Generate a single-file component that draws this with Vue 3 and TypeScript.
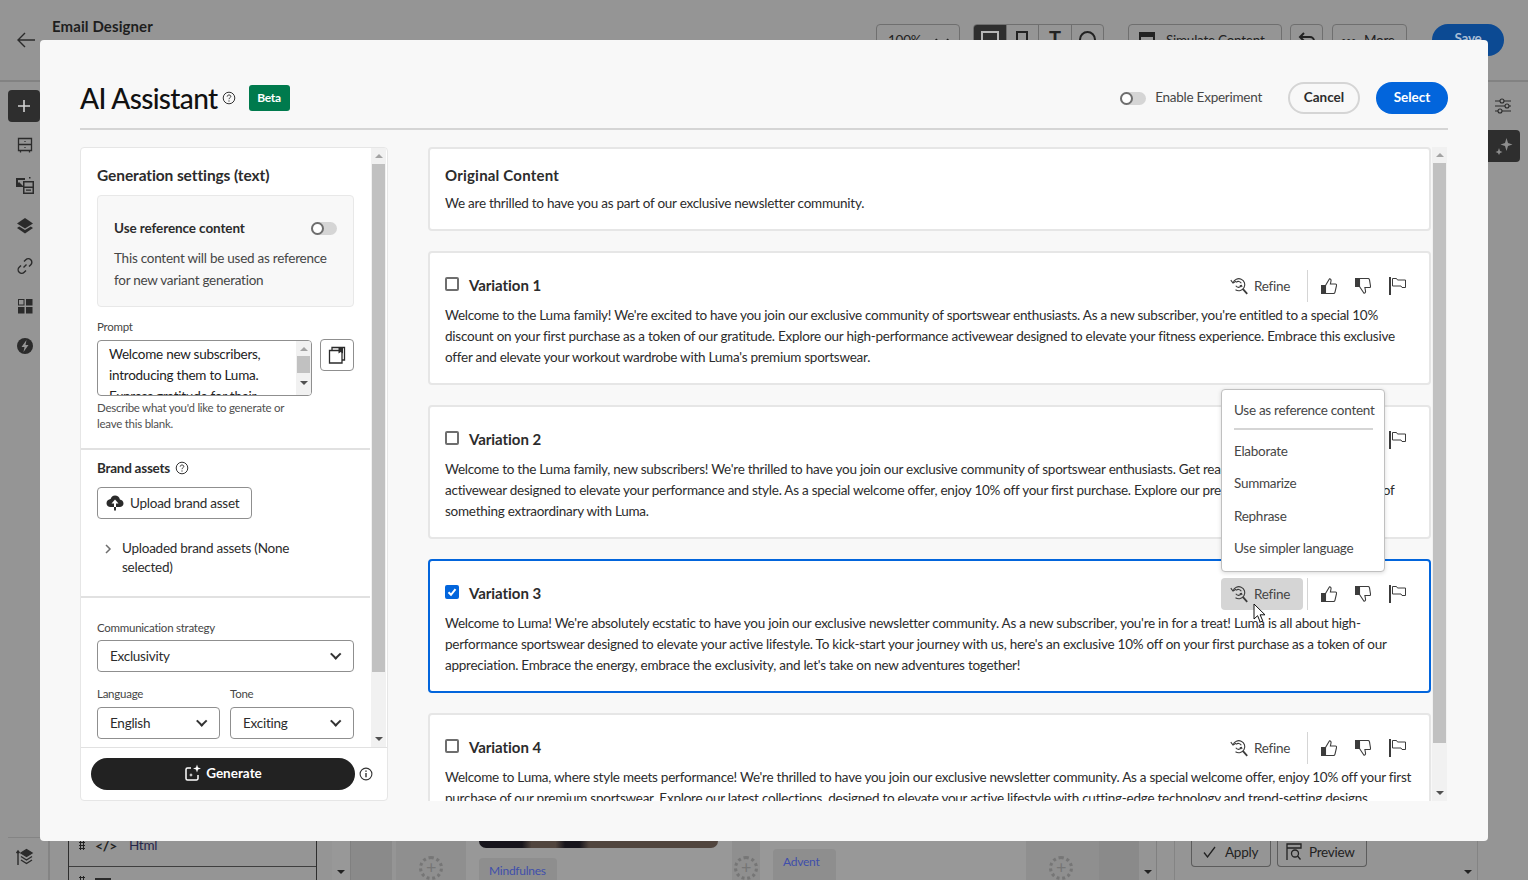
<script setup lang="ts">
interface Variation {
  title: string;
  lines: string[];
  selected?: boolean;
}

const variations: Variation[] = [
  {
    title: "Variation 1",
    lines: [
      "Welcome to the Luma family! We're excited to have you join our exclusive community of sportswear enthusiasts. As a new subscriber, you're entitled to a special 10%",
      "discount on your first purchase as a token of our gratitude. Explore our high-performance activewear designed to elevate your fitness experience. Embrace this exclusive",
      "offer and elevate your workout wardrobe with Luma's premium sportswear.",
    ],
  },
  {
    title: "Variation 2",
    lines: [
      "Welcome to the Luma family, new subscribers! We're thrilled to have you join our exclusive community of sportswear enthusiasts. Get ready to discover our premium",
      "activewear designed to elevate your performance and style. As a special welcome offer, enjoy 10% off your first purchase. Explore our premium gear and become part of",
      "something extraordinary with Luma.",
    ],
  },
  {
    title: "Variation 3",
    selected: true,
    lines: [
      "Welcome to Luma! We're absolutely ecstatic to have you join our exclusive newsletter community. As a new subscriber, you're in for a treat! Luma is all about high-",
      "performance sportswear designed to elevate your active lifestyle. To kick-start your journey with us, here's an exclusive 10% off on your first purchase as a token of our",
      "appreciation. Embrace the energy, embrace the exclusivity, and let's take on new adventures together!",
    ],
  },
  {
    title: "Variation 4",
    lines: [
      "Welcome to Luma, where style meets performance! We're thrilled to have you join our exclusive newsletter community. As a special welcome offer, enjoy 10% off your first",
      "purchase of our premium sportswear. Explore our latest collections, designed to elevate your active lifestyle with cutting-edge technology and trend-setting designs.",
    ],
  },
];

const refineOptions = ["Elaborate", "Summarize", "Rephrase", "Use simpler language"];
</script>

<template>
  <div class="page">
    <header class="topbar">
      <svg class="back" width="20" height="18" viewBox="0 0 20 18" fill="none" stroke="#2b2b2b" stroke-width="1.4">
        <path d="M19 9H2M9 2 2 9l7 7" />
      </svg>
      <div class="page-title">Email Designer</div>
      <div class="tools">
        <div class="tool zoom-tool">100%<span class="tool-caret"></span></div>
        <div class="segments">
          <span class="seg seg-on"><i class="seg-box"></i></span>
          <span class="seg"><i class="seg-phone"></i></span>
          <span class="seg seg-t">T</span>
          <span class="seg"><i class="seg-round"></i></span>
        </div>
        <div class="tool sim-tool"><i class="sim-icon"></i>Simulate Content</div>
        <div class="tool undo-tool">
          <svg width="18" height="14" viewBox="0 0 18 14" fill="none" stroke="#222" stroke-width="2"><path d="M6 1 2 5l4 4M2 5h10a4 4 0 0 1 4 4v3" /></svg>
        </div>
        <div class="tool more-tool"><b>•••</b>More</div>
        <div class="save">Save</div>
      </div>
    </header>

    <div class="workspace">
      <nav class="rail">
        <div class="rail-add">
          <svg width="14" height="14" viewBox="0 0 14 14" stroke="#d2d2d2" stroke-width="1.6"><path d="M7 1v12M1 7h12" /></svg>
        </div>
        <svg class="rail-icon" width="18" height="18" viewBox="0 0 18 18" fill="none" stroke="#2b2b2b" stroke-width="1.3">
          <path d="M2.500 2.500h13v12h-13zM2.500 8.500h13M4.500 14.500v2M13.500 14.500v2" /><path d="M9 5v.8M9 11v.8" stroke-width="1.600" />
        </svg>
        <svg class="rail-icon rail-icon-wide" width="18" height="18" viewBox="0 0 18 18" fill="#2b2b2b">
          <path d="M0 2h9v2H2v5H0z" /><path d="M0 9l3-3 4 4v1H0z" /><path d="M7 5h11v13H7zm1.500 7v4.500h8V12zm0-5.500V10.500h8V6.500z" fill-rule="evenodd" /><path d="M10 13.500h5v1.200h-5zM13 1h1.500v1.500H13z" />
        </svg>
        <svg class="rail-icon" width="18" height="18" viewBox="0 0 18 18" fill="#2b2b2b">
          <path d="M9 1 17 6.500 9 11.500 1 6.500z" /><path d="M3.200 9.500 9 13.100l5.800-3.600L17 11l-8 5.500L1 11z" />
        </svg>
        <svg class="rail-icon" width="18" height="18" viewBox="0 0 18 18" fill="none" stroke="#2b2b2b" stroke-width="1.4">
          <path d="M7.500 10.500 10.500 7.500M8 4.500l1.800-1.800a3.400 3.400 0 0 1 5 5L13 9.500M10 13.500l-1.800 1.800a3.400 3.400 0 0 1-5-5L5 8.500" />
        </svg>
        <svg class="rail-icon" width="18" height="18" viewBox="0 0 18 18" fill="#2b2b2b">
          <path d="M2 2h6.500v6.500H2zm1 1v4.500h4.500V3z" fill-rule="evenodd" /><path d="M10 2h6.500v6.500H10zM2 10h6.500v6.500H2zM10 10h6.500v6.500H10z" />
        </svg>
        <svg class="rail-icon" width="18" height="18" viewBox="0 0 18 18">
          <circle cx="9" cy="9" r="8" fill="#2b2b2b" /><path d="M10.500 3 5.500 10H8.500L7.500 15l5-7H9.500z" fill="#959595" />
        </svg>
        <div class="rail-bottom">
          <svg width="18" height="18" viewBox="0 0 18 18" fill="none" stroke="#2b2b2b" stroke-width="1.400">
            <path d="M2 17V3M.5 5 2 3l1.500 2" /><path d="M10.500 1.500 16 5l-5.500 3.500L5 5z" fill="#2b2b2b" /><path d="M5 8.500l5.500 3.500L16 8.500M5 12l5.500 3.500L16 12" />
          </svg>
        </div>
      </nav>

      <div class="blocks">
        <div class="blocks-list">
          <div class="block-row">
            <i class="grip"></i>
            <span class="code-mark">&lt;/&gt;</span>
            <span>Html</span>
          </div>
          <div class="block-next"><i class="grip"></i><b></b></div>
        </div>
        <div class="scroll-strip"><i class="arrow-down"></i></div>
      </div>

      <div class="canvas-gutter"></div>

      <div class="canvas">
        <div class="canvas-add add-a"><span>+</span></div>
        <div class="canvas-col">
          <div class="photo"></div>
          <div class="chip chip-first">Mindfulnes</div>
        </div>
        <div class="canvas-add add-b"><span>+</span></div>
        <div class="canvas-col">
          <div class="chip">Advent<br />ure</div>
        </div>
        <div class="canvas-add add-c"><span>+</span></div>
        <div class="canvas-dark"></div>
        <div class="canvas-scroll"><i class="arrow-down"></i></div>
      </div>

      <aside class="props">
        <div class="props-side">
          <svg width="18" height="16" viewBox="0 0 18 16" fill="none" stroke="#2b2b2b" stroke-width="1.100">
            <path d="M1 3h5M10 3h7M1 8h10M15 8h2M1 13h3M8 13h9" /><circle cx="8" cy="3" r="2" /><circle cx="13" cy="8" r="2" /><circle cx="6" cy="13" r="2" />
          </svg>
          <div class="props-tile">
            <svg width="18" height="18" viewBox="0 0 18 18" fill="#8e8e8e"><path d="M11.500 1 13 6l4.500 1.500L13 9l-1.500 5L10 9 5.500 7.500 10 6zM4 11l1 3 2.500 1-2.500 1-1 2-1-2-2.500-1L3 14z" /></svg>
          </div>
        </div>
        <div class="props-foot">
          <div class="foot-btn btn-apply">
            <svg width="13" height="12" viewBox="0 0 13 12" fill="none" stroke="#222" stroke-width="1.300"><path d="m1 6.500 3.500 4.500L12 1" /></svg>
            Apply
          </div>
          <div class="foot-btn btn-preview">
            <svg width="17" height="18" viewBox="0 0 17 18" fill="none" stroke="#222" stroke-width="1.300"><path d="M1 17V1h14v4H1" /><circle cx="9" cy="10.500" r="3.500" /><path d="m11.500 13 3 3.500" /></svg>
            Preview
          </div>
          <div class="foot-scroll"><i class="arrow-down"></i></div>
        </div>
      </aside>
    </div>

    <section class="modal">
      <div class="modal-head">
        <h1>AI Assistant</h1>
        <svg class="help" width="14" height="14" viewBox="0 0 14 14" fill="none" stroke="#333" stroke-width="1">
          <circle cx="7" cy="7" r="5.800" /><path d="M5.200 5.600C5.300 4.500 6 4 7 4c1.100 0 1.800.6 1.800 1.500C8.800 6.700 7 6.800 7 8.200" /><path d="M7 9.400v1" stroke-width="1.200" />
        </svg>
        <span class="beta">Beta</span>
        <div class="head-actions">
          <span class="switch"><i></i></span>
          <span class="experiment">Enable Experiment</span>
          <button class="btn-cancel">Cancel</button>
          <button class="btn-select">Select</button>
        </div>
      </div>

      <div class="modal-body">
        <div class="settings">
          <div class="settings-main">
            <div class="settings-scroll">
              <div class="section section-gen">
                <h2>Generation settings (text)</h2>
                <div class="ref-box">
                  <div class="ref-head">
                    <strong>Use reference content</strong>
                    <span class="switch switch-small"><i></i></span>
                  </div>
                  <p>This content will be used as reference<br />for new variant generation</p>
                </div>
                <label class="field-label prompt-label">Prompt</label>
                <div class="prompt-row">
                  <div class="prompt-box">
                    <div class="prompt-text">
                      Welcome new subscribers,<br />introducing them to Luma.<br />Express gratitude for their
                    </div>
                    <div class="mini-scroll">
                      <i class="arrow-up"></i>
                      <b></b>
                      <i class="arrow-down"></i>
                    </div>
                  </div>
                  <button class="prompt-lib">
                    <svg width="18" height="18" viewBox="0 0 18 18" fill="none" stroke="#2b2b2b" stroke-width="1.300">
                      <path d="M4 4V1.500h12.500V14H14" /><path d="M1.500 4.500H14V17H1.500z" /><path d="M10.500 1.500h4.500v6l-2.200-1.500-2.300 1.500z" fill="#2b2b2b" stroke="none" />
                    </svg>
                  </button>
                </div>
                <p class="helper">Describe what you'd like to generate or<br />leave this blank.</p>
              </div>

              <div class="section section-brand">
                <div class="brand-title">
                  <h3>Brand assets</h3>
                  <svg width="14" height="14" viewBox="0 0 14 14" fill="none" stroke="#333" stroke-width="1">
                    <circle cx="7" cy="7" r="5.800" /><path d="M5.200 5.600C5.300 4.500 6 4 7 4c1.100 0 1.800.6 1.800 1.500C8.800 6.700 7 6.800 7 8.200" /><path d="M7 9.400v1" stroke-width="1.200" />
                  </svg>
                </div>
                <button class="upload">
                  <svg width="18" height="16" viewBox="0 0 18 16" fill="#2b2b2b">
                    <path d="M9 .5C6.800.5 5 2 4.600 4.100 2.500 4.300.5 6 .5 8.300.5 10.500 2.300 12 4.500 12H8V8.500H5.500L9 4.500l3.500 4H10V12h3.800c2 0 3.700-1.500 3.700-3.600 0-2.100-1.600-3.800-3.600-4C13.400 2 11.400.5 9 .5z" /><path d="M8 12h2v3.500H8z" />
                  </svg>
                  Upload brand asset
                </button>
                <div class="uploaded">
                  <svg width="8" height="10" viewBox="0 0 8 10" fill="none" stroke="#6e6e6e" stroke-width="1.500"><path d="m2 1 4 4-4 4" /></svg>
                  <span>Uploaded brand assets (None<br />selected)</span>
                </div>
              </div>

              <div class="section section-form">
                <label class="field-label">Communication strategy</label>
                <div class="select">Exclusivity<i class="chev"></i></div>
                <div class="select-pair">
                  <div>
                    <label class="field-label">Language</label>
                    <div class="select">English<i class="chev"></i></div>
                  </div>
                  <div>
                    <label class="field-label">Tone</label>
                    <div class="select">Exciting<i class="chev"></i></div>
                  </div>
                </div>
              </div>
            </div>
            <div class="scrollbar scrollbar-left">
              <i class="arrow-up"></i>
              <b></b>
              <i class="arrow-down"></i>
            </div>
          </div>
          <div class="settings-foot">
            <button class="generate">
              <svg width="18" height="18" viewBox="0 0 18 18" fill="none" stroke="#fff" stroke-width="1.500">
                <path d="M7 4H3.500A1.500 1.500 0 0 0 2 5.500v9A1.500 1.500 0 0 0 3.500 16h9a1.500 1.500 0 0 0 1.500-1.500V11" />
                <path d="M13 .5l1 3 3 1-3 1-1 3-1-3-3-1 3-1zM7 9l.6 1.400L9 11l-1.400.6L7 13l-.6-1.400L5 11l1.400-.6z" fill="#fff" stroke="none" />
              </svg>
              Generate
            </button>
            <svg width="14" height="14" viewBox="0 0 14 14" fill="none" stroke="#333" stroke-width="1.100">
              <circle cx="7" cy="7" r="5.900" /><path d="M7 6v4.200" stroke-width="1.400" /><path d="M7 3.400v1.400" stroke-width="1.500" />
            </svg>
          </div>
        </div>

        <div class="results">
          <div class="results-list">
            <article class="card card-original">
              <h2>Original Content</h2>
              <p>We are thrilled to have you as part of our exclusive newsletter community.</p>
            </article>

            <article
              v-for="item in variations"
              :key="item.title"
              :class="{ card: true, 'card-selected': item.selected }"
            >
              <div class="card-head">
                <span :class="{ check: true, 'check-on': item.selected }">
                  <svg v-if="item.selected" width="10" height="10" viewBox="0 0 10 10" fill="none" stroke="#fff" stroke-width="2"><path d="m1.500 5.200 2.500 2.600 4.500-5.600" /></svg>
                </span>
                <h3>{{ item.title }}</h3>
                <div class="card-tools">
                  <div :class="{ refine: true, 'refine-hover': item.selected }">
                    <svg width="18" height="18" viewBox="0 0 18 18" fill="none" stroke="#3c3c3c" stroke-width="1.100">
                      <path d="M3.100 5.800A6 6 0 1 1 5.500 12.700" />
                      <path d="M.8 3.200l2.200 2.900 3-1.800" />
                      <path d="M5.800 8.800a3.200 3.200 0 0 0 5.600-.2M11.300 6.200a3.200 3.200 0 0 0-5.200-.8" />
                      <path d="m9.800 8.900 1.700-.5.500 1.600" />
                      <path d="m12.800 11.800 4.400 5" stroke-width="1.800" />
                    </svg>
                    <span>Refine</span>
                    <div v-if="item.selected" class="menu">
                      <div class="menu-first">Use as reference content</div>
                      <div class="menu-rule"></div>
                      <div v-for="opt in refineOptions" :key="opt" class="menu-item">{{ opt }}</div>
                    </div>
                    <svg v-if="item.selected" class="cursor" width="14" height="21" viewBox="0 0 14 21">
                      <path d="M1 1v15l3.600-3.300L7.200 19l2.600-1.100-2.700-6.100H12z" fill="#fff" stroke="#111" stroke-width="1" />
                    </svg>
                  </div>
                  <span class="tools-rule"></span>
                  <svg class="vote" width="16" height="16" viewBox="0 0 16 16" fill="none" stroke="#3c3c3c" stroke-width="1.100">
                    <path d="M.5 7.500h4v8h-4z" fill="#3c3c3c" /><path d="M4.500 7.500 8.500.8c1.300 0 1.700 1 1.500 2.200L9.400 6h5c1 0 1.300.8 1.100 1.600l-1.500 6.600c-.2.800-.7 1.300-1.500 1.300H4.500" />
                  </svg>
                  <svg class="vote" width="16" height="16" viewBox="0 0 16 16" fill="none" stroke="#3c3c3c" stroke-width="1.100">
                    <path d="M.5.500h4v8h-4z" fill="#3c3c3c" /><path d="M4.500.5h8.500c.8 0 1.300.5 1.500 1.300L15.500 8c.2.900-.2 1.500-1.100 1.500h-4.500l.6 3.500c.2 1.200-.3 2.300-1.500 2.200L4.500 8.500" />
                  </svg>
                  <svg class="vote flag" width="18" height="18" viewBox="0 0 18 18" fill="none" stroke="#3c3c3c" stroke-width="1">
                    <path d="M1 0v18" stroke-width="2" /><path d="M3.500 9V1.500h4l1 1.500h8v7.500h-3.500l-1-1.500z" />
                  </svg>
                </div>
              </div>
              <p v-for="line in item.lines" :key="line" class="card-line">{{ line }}</p>
            </article>
          </div>
          <div class="scrollbar scrollbar-right">
            <i class="arrow-up"></i>
            <b></b>
            <i class="arrow-down"></i>
          </div>
        </div>
      </div>
    </section>
  </div>
</template>

<style scoped>
.page {
  position: relative;
  width: 1528px;
  height: 880px;
  overflow: hidden;
  display: flex;
  flex-direction: column;
  background: #959595;
  color: #2c2c2c;
  font-family: Lato, "Noto Sans", sans-serif;
  font-size: 13.5px;
  letter-spacing: -0.25px;
}

button {
  font-family: inherit;
  letter-spacing: inherit;
  cursor: pointer;
}

h1, h2, h3, p {
  margin: 0;
}

/* page behind the dialog */
.topbar {
  height: 82px;
  flex: none;
  box-sizing: border-box;
  border-bottom: 2px solid #828282;
  position: relative;
  display: flex;
  padding: 24px 24px 0 52px;
  color: #1e1e1e;
}
.back {
  position: absolute;
  left: 16px;
  top: 31px;
}
.page-title {
  font-size: 15px;
  font-weight: 700;
  letter-spacing: 0.1px;
  margin-top: -7px;
  height: 20px;
}
.tools {
  margin-left: auto;
  display: flex;
  height: 32px;
  color: #222;
}
.tool {
  box-sizing: border-box;
  height: 32px;
  border: 1px solid #6f6f6f;
  border-radius: 4px;
  display: flex;
  align-items: flex-start;
  padding-top: 7px;
  font-size: 13.5px;
}
.zoom-tool {
  width: 84px;
  padding-left: 11px;
  margin-right: 13px;
}
.tool-caret {
  width: 8px;
  height: 8px;
  margin: 3px 0 0 16px;
  border-right: 2px solid #222;
  border-bottom: 2px solid #222;
  transform: rotate(45deg);
}
.segments {
  width: 131px;
  height: 32px;
  box-sizing: border-box;
  border: 1px solid #6f6f6f;
  border-radius: 4px;
  display: flex;
  margin-right: 24px;
  overflow: hidden;
}
.seg {
  flex: 1;
  border-right: 1px solid #6f6f6f;
  display: flex;
  justify-content: center;
  padding-top: 6px;
}
.seg:last-child {
  border-right: 0;
}
.seg-on {
  background: #2e2e2e;
}
.seg-box {
  width: 14px;
  height: 12px;
  border: 2px solid #b5b5b5;
}
.seg-phone {
  width: 8px;
  height: 14px;
  border: 2px solid #222;
}
.seg-t {
  font-size: 20px;
  line-height: 20px;
  padding-top: 3px;
  font-weight: 700;
}
.seg-round {
  width: 13px;
  height: 13px;
  border: 2px solid #222;
  border-radius: 50%;
}
.sim-tool {
  width: 154px;
  margin-right: 8px;
  padding-left: 10px;
  white-space: nowrap;
}
.sim-icon {
  width: 16px;
  height: 16px;
  border: 2px solid #222;
  border-top-width: 5px;
  margin-right: 11px;
  box-sizing: border-box;
}
.undo-tool {
  width: 33px;
  margin-right: 9px;
  justify-content: center;
}
.more-tool {
  width: 75px;
  margin-right: 25px;
  padding-left: 8px;
}
.more-tool b {
  font-size: 9px;
  margin-right: 8px;
  padding-top: 3px;
}
.save {
  width: 72px;
  height: 32px;
  border-radius: 16px;
  background: #0c4a93;
  color: #a9bdd5;
  font-weight: 700;
  text-align: center;
  line-height: 28px;
}

.workspace {
  flex: 1;
  display: flex;
  min-height: 0;
}
.rail {
  width: 50px;
  flex: none;
  box-sizing: border-box;
  border-right: 2px solid #848484;
  display: flex;
  flex-direction: column;
  align-items: center;
  padding: 8px 0 0 2px;
}
.rail-add {
  width: 32px;
  height: 32px;
  border-radius: 4px;
  margin-left: -2px;
  background: #2e2e2e;
  display: grid;
  place-content: center;
  margin-bottom: 14px;
}
.rail-icon {
  margin-bottom: 22px;
}
.rail-icon-wide {
  margin-bottom: 23px;
}
.rail-bottom {
  margin-top: auto;
  width: 34px;
  height: 43px;
  border-top: 1px solid #848484;
  display: flex;
  justify-content: center;
  padding-top: 10px;
  box-sizing: border-box;
}
.blocks {
  width: 300px;
  flex: none;
  padding-left: 18px;
  display: flex;
  align-items: flex-end;
  box-sizing: border-box;
}
.blocks-list {
  width: 249px;
  height: 39px;
  box-sizing: border-box;
  border-left: 1px solid #2e2e2e;
  border-right: 1px solid #2e2e2e;
}
.block-row {
  height: 26px;
  box-sizing: border-box;
  border-bottom: 1px solid #3e3e3e;
  display: flex;
  align-items: flex-start;
  line-height: 9px;
  color: #26264a;
  font-size: 13.5px;
}
.grip {
  flex: none;
  width: 6px;
  height: 9px;
  margin: 0 10px 0 10px;
  background: radial-gradient(circle, #222 1px, transparent 1.2px) 0 0 / 3px 3px;
}
.code-mark {
  width: 34px;
  font-weight: 700;
  color: #222;
  font-size: 14px;
}
.block-next {
  display: flex;
  padding-top: 9px;
}
.block-next .grip {
  height: 5px;
}
.block-next b {
  width: 16px;
  height: 4px;
  background: #2b2b2b;
  margin-top: 2px;
}
.scroll-strip {
  margin-left: 15px;
  width: 18px;
  height: 39px;
  background: #989898;
  display: flex;
  align-items: flex-end;
  justify-content: center;
  padding-bottom: 6px;
  box-sizing: border-box;
}
.canvas-gutter {
  width: 46px;
  flex: none;
  background: #8a8a8a;
  border-left: 1px solid #808080;
  border-right: 4px solid #959595;
  box-sizing: border-box;
}
.canvas {
  width: 761px;
  flex: none;
  display: flex;
  align-items: flex-end;
}
.canvas-add {
  flex: none;
  height: 39px;
  box-sizing: border-box;
  display: flex;
  justify-content: center;
  padding-top: 15px;
  background: #8f8f8f;
}
.add-a {
  width: 70px;
}
.add-b {
  width: 28px;
}
.add-c {
  width: 73px;
  padding-right: 3px;
}
.canvas-add span {
  flex: none;
  width: 24px;
  height: 24px;
  box-sizing: border-box;
  border: 3px dotted #767676;
  border-radius: 50%;
  color: #767676;
  font-size: 18px;
  line-height: 17px;
  text-align: center;
}
.canvas-col {
  width: 266px;
  flex: none;
  height: 39px;
  background: #989898;
  padding: 0 0 0 13px;
  box-sizing: border-box;
}
.photo {
  width: 239px;
  height: 7px;
  border-radius: 0 0 14px 14px;
  background: linear-gradient(90deg, #17151c 0 18%, #51453e 22% 32%, #17151c 36% 42%, #51453e 46% 100%);
}
.chip {
  background: #8e8e8e;
  width: 63px;
  border-radius: 4px 4px 0 0;
  padding: 3px 0 0 10px;
  color: #3f4fab;
  font-size: 12px;
  line-height: 20px;
  height: 31px;
  box-sizing: border-box;
  overflow: hidden;
  margin-top: 8px;
}
.chip-first {
  width: 78px;
  height: 22px;
  margin-top: 10px;
}
.canvas-dark {
  width: 40px;
  height: 39px;
  flex: none;
  background: #8a8a8a;
}
.canvas-scroll {
  flex: 1;
  height: 39px;
  border-right: 1px solid #808080;
  background: #959595;
  display: flex;
  justify-content: center;
  align-items: flex-end;
  padding-bottom: 6px;
  box-sizing: border-box;
}
.props {
  flex: 1;
  box-sizing: border-box;
  border-left: 1px solid #848484;
  margin-left: 17px;
  display: flex;
  flex-direction: column;
}
.props-side {
  align-self: flex-end;
  width: 40px;
  padding: 16px 8px 0 0;
  display: flex;
  flex-direction: column;
  align-items: flex-end;
}
.props-side > svg {
  margin-right: 8px;
}
.props-tile {
  width: 32px;
  height: 32px;
  margin-top: 16px;
  border-radius: 0 4px 4px 0;
  background: #2e2e2e;
  display: grid;
  place-content: center;
}
.props-foot {
  margin-top: auto;
  display: flex;
  align-items: flex-end;
  height: 39px;
  gap: 6px;
  padding-left: 16px;
}
.foot-btn {
  height: 26px;
  box-sizing: border-box;
  border: 1px solid #5c5c5c;
  border-top: 0;
  border-radius: 0 0 4px 4px;
  padding: 0 0 4px 0;
  margin-bottom: 13px;
  display: flex;
  align-items: center;
  color: #222;
  font-size: 13.5px;
}
.btn-apply {
  width: 80px;
  padding-left: 11px;
  gap: 9px;
}
.btn-preview {
  width: 90px;
  padding-left: 8px;
  gap: 6px;
}
.foot-scroll {
  margin-left: auto;
  border-right: 1px solid #848484;
  width: 14px;
  height: 39px;
  margin-right: 50px;
  display: flex;
  align-items: flex-end;
  padding-bottom: 6px;
  box-sizing: border-box;
}

/* dialog */
.modal {
  position: absolute;
  left: 40px;
  top: 40px;
  width: 1448px;
  height: 801px;
  box-sizing: border-box;
  padding: 0 40px 40px;
  background: #f8f8f8;
  border-radius: 4px;
  display: flex;
  flex-direction: column;
}
.modal-head {
  height: 90px;
  flex: none;
  box-sizing: border-box;
  border-bottom: 2px solid #d5d5d5;
  display: flex;
  align-items: center;
  padding: 28px 0 0;
}
.modal-head h1 {
  font-size: 28px;
  font-weight: 500;
  letter-spacing: -0.65px;
  color: #111;
}
.help {
  margin-left: 4px;
}
.beta {
  width: 41px;
  height: 26px;
  margin-left: 13px;
  border-radius: 3px;
  background: #007a4d;
  color: #fff;
  font-size: 12px;
  font-weight: 700;
  text-align: center;
  line-height: 26px;
}
.head-actions {
  margin-left: auto;
  display: flex;
  align-items: center;
}
.switch {
  width: 26px;
  height: 13px;
  border-radius: 7px;
  background: #d5d5d5;
  display: block;
  position: relative;
}
.switch i {
  position: absolute;
  left: 0;
  top: 0;
  width: 13px;
  height: 13px;
  box-sizing: border-box;
  border: 2px solid #6e6e6e;
  border-radius: 50%;
  background: #fff;
}
.experiment {
  margin: -2px 26px 0 9px;
  color: #464646;
}
.btn-cancel,
.btn-select {
  height: 32px;
  width: 72px;
  border-radius: 16px;
  font-size: 13.5px;
  font-weight: 700;
  letter-spacing: 0;
  padding: 0 0 2px;
}
.btn-cancel {
  border: 2px solid #d5d5d5;
  background: #f8f8f8;
  color: #2c2c2c;
}
.btn-select {
  margin-left: 16px;
  border: 0;
  background: #0265dc;
  color: #fff;
}
.modal-body {
  flex: 1;
  min-height: 0;
  display: flex;
  gap: 40px;
  margin-top: 17px;
}

/* settings column */
.settings {
  width: 308px;
  flex: none;
  box-sizing: border-box;
  background: #fff;
  border: 1px solid #e6e6e6;
  border-radius: 4px;
  display: flex;
  flex-direction: column;
}
.settings-main {
  flex: 1;
  min-height: 0;
  display: flex;
}
.settings-scroll {
  width: 289px;
  flex: none;
  overflow: hidden;
}
.section {
  box-sizing: border-box;
  padding: 0 16px;
  border-bottom: 2px solid #e1e1e1;
}
.section-gen {
  height: 302px;
  padding-top: 17px;
}
.section-gen h2 {
  font-size: 15.5px;
  font-weight: 700;
  letter-spacing: -0.1px;
  line-height: 20px;
  color: #2c2c2c;
}
.ref-box {
  height: 112px;
  box-sizing: border-box;
  margin-top: 10px;
  padding: 22px 16px 0;
  background: #f8f8f8;
  border: 1px solid #e8e8e8;
  border-radius: 4px;
}
.ref-head {
  display: flex;
  justify-content: space-between;
  align-items: center;
  height: 20px;
}
.ref-head strong {
  font-weight: 700;
  font-size: 13.5px;
  letter-spacing: -0.1px;
}
.ref-box p {
  margin-top: 9px;
  line-height: 22px;
  color: #464646;
}
.field-label {
  display: block;
  font-size: 11.5px;
  line-height: 16px;
  color: #464646;
}
.prompt-label {
  margin-top: 12px;
}
.prompt-row {
  display: flex;
  margin-top: 5px;
  gap: 8px;
  align-items: flex-start;
}
.prompt-box {
  width: 215px;
  height: 56px;
  box-sizing: border-box;
  border: 1px solid #8f8f8f;
  border-radius: 4px;
  display: flex;
  overflow: hidden;
}
.prompt-text {
  flex: 1;
  padding: 3px 0 0 11px;
  line-height: 21px;
  white-space: nowrap;
  overflow: hidden;
  color: #222;
}
.mini-scroll {
  width: 15px;
  background: #f1f1f1;
  display: flex;
  flex-direction: column;
  align-items: center;
  padding-top: 6px;
  box-sizing: border-box;
}
.mini-scroll b {
  width: 13px;
  height: 17px;
  margin: 5px 0 8px;
  background: #c1c1c1;
}
.prompt-lib {
  width: 34px;
  height: 32px;
  margin-top: -1px;
  padding: 0;
  border: 1px solid #8f8f8f;
  border-radius: 4px;
  background: #fff;
  display: grid;
  place-content: center;
}
.helper {
  margin-top: 4px;
  font-size: 11.5px;
  line-height: 16px;
  color: #505050;
}
.section-brand {
  height: 148px;
  padding-top: 8px;
}
.brand-title {
  display: flex;
  align-items: center;
  gap: 5px;
  height: 20px;
}
.brand-title h3 {
  font-size: 13.5px;
  font-weight: 700;
}
.upload {
  margin-top: 9px;
  width: 155px;
  height: 32px;
  border: 1px solid #8f8f8f;
  border-radius: 4px;
  background: #fff;
  color: #2c2c2c;
  display: flex;
  align-items: center;
  gap: 6px;
  padding: 0 0 0 8px;
  font-size: 13.5px;
}
.uploaded {
  display: flex;
  margin-top: 20px;
  padding-left: 7px;
  gap: 10px;
  line-height: 19px;
  align-items: flex-start;
}
.uploaded svg {
  margin-top: 5px;
}
.section-form {
  border-bottom: 0;
  padding-top: 22px;
}
.select {
  height: 32px;
  box-sizing: border-box;
  margin-top: 4px;
  padding: 0 12px;
  border: 1px solid #8f8f8f;
  border-radius: 4px;
  display: flex;
  align-items: center;
  justify-content: space-between;
  background: #fff;
}
.chev {
  width: 5.5px;
  height: 5.5px;
  margin: -4px 2px 0 0;
  border-right: 2px solid #333;
  border-bottom: 2px solid #333;
  transform: rotate(45deg);
}
.select-pair {
  display: grid;
  grid-template-columns: 123px 124px;
  column-gap: 10px;
  margin-top: 14px;
}
.select-pair .select {
  margin-top: 5px;
}
.settings-foot {
  height: 53px;
  flex: none;
  box-sizing: border-box;
  border-top: 1px solid #e1e1e1;
  display: flex;
  align-items: center;
  gap: 4px;
  padding: 0 0 0 10px;
}
.generate {
  width: 264px;
  height: 32px;
  border: 0;
  padding: 0 0 2px;
  border-radius: 16px;
  background: #222;
  color: #fff;
  font-weight: 700;
  font-size: 13.5px;
  letter-spacing: 0;
  display: flex;
  align-items: center;
  justify-content: center;
  gap: 4px;
}

.scrollbar {
  width: 15px;
  flex: none;
  display: flex;
  flex-direction: column;
  align-items: center;
  box-sizing: border-box;
  background: #f1f1f1;
  padding-top: 6px;
}
.scrollbar b {
  width: 13px;
  margin-top: 6px;
  background: #c1c1c1;
}
.scrollbar .arrow-down {
  margin-top: auto;
  margin-bottom: 6px;
}
.scrollbar-left {
  margin-left: 1px;
}
.scrollbar-left b {
  height: 508px;
}
.scrollbar-right {
  margin-left: 1px;
}
.scrollbar-right b {
  height: 580px;
}
.arrow-up,
.arrow-down {
  display: block;
  width: 0;
  height: 0;
  border-left: 4px solid transparent;
  border-right: 4px solid transparent;
}
.arrow-up {
  border-bottom: 4px solid #a3a3a3;
}
.arrow-down {
  border-top: 4px solid #505050;
}
.scroll-strip .arrow-down,
.canvas-scroll .arrow-down,
.foot-scroll .arrow-down {
  border-top-color: #222;
}

/* results column */
.results {
  width: 1020px;
  flex: none;
  display: flex;
  min-height: 0;
}
.results-list {
  width: 1003px;
  flex: none;
  display: flex;
  flex-direction: column;
  gap: 20px;
  overflow: hidden;
}
.card {
  box-sizing: border-box;
  flex: none;
  height: 134px;
  padding: 0 15px;
  background: #fff;
  border: 2px solid #e6e6e6;
  border-radius: 4px;
}
.card-original {
  height: 84px;
  padding-top: 16px;
}
.card-original h2 {
  font-size: 15px;
  font-weight: 700;
  letter-spacing: 0.2px;
  line-height: 20px;
}
.card-original p {
  margin-top: 8px;
  line-height: 20px;
}
.card-selected {
  border-color: #0265dc;
  position: relative;
}
.card-head {
  height: 52px;
  box-sizing: border-box;
  padding-top: 14px;
  display: flex;
  align-items: center;
}
.check {
  width: 14px;
  height: 14px;
  box-sizing: border-box;
  border: 2px solid #6e6e6e;
  border-radius: 2px;
  margin-top: -4px;
  display: grid;
  place-content: center;
}
.check-on {
  background: #0265dc;
  border-color: #0265dc;
}
.card-head h3 {
  margin: -2px 0 0 10px;
  font-size: 15px;
  font-weight: 700;
  letter-spacing: -0.05px;
}
.card-tools {
  margin-left: auto;
  margin-right: 7px;
  display: flex;
  align-items: center;
}
.refine {
  position: relative;
  width: 82px;
  height: 32px;
  box-sizing: border-box;
  border-radius: 4px;
  display: flex;
  align-items: center;
  gap: 6px;
  padding-left: 9px;
  color: #464646;
}
.refine-hover {
  background: #d5d5d5;
}
.tools-rule {
  width: 1px;
  height: 32px;
  margin: 0 13px 0 4px;
  background: #d5d5d5;
}
.vote {
  margin-right: 18px;
}
.vote.flag {
  margin-right: 0;
}
.card-line {
  line-height: 21px;
  white-space: nowrap;
}
.menu {
  position: absolute;
  left: 0;
  bottom: 38px;
  width: 164px;
  height: 183px;
  box-sizing: border-box;
  padding: 10px 11px 0 12px;
  background: #fff;
  border: 1px solid #c0c0c0;
  border-radius: 4px;
  box-shadow: 0 1px 4px rgba(0, 0, 0, 0.15);
  white-space: nowrap;
  letter-spacing: -0.28px;
  z-index: 2;
}
.menu-first {
  line-height: 20px;
}
.menu-rule {
  height: 2px;
  margin: 8px 0 11px;
  background: #d5d5d5;
}
.menu-item {
  height: 32.4px;
  line-height: 20px;
}
.cursor {
  position: absolute;
  left: 32px;
  top: 25px;
  z-index: 3;
}
</style>

<style>
body {
  background: #959595;
}
</style>
